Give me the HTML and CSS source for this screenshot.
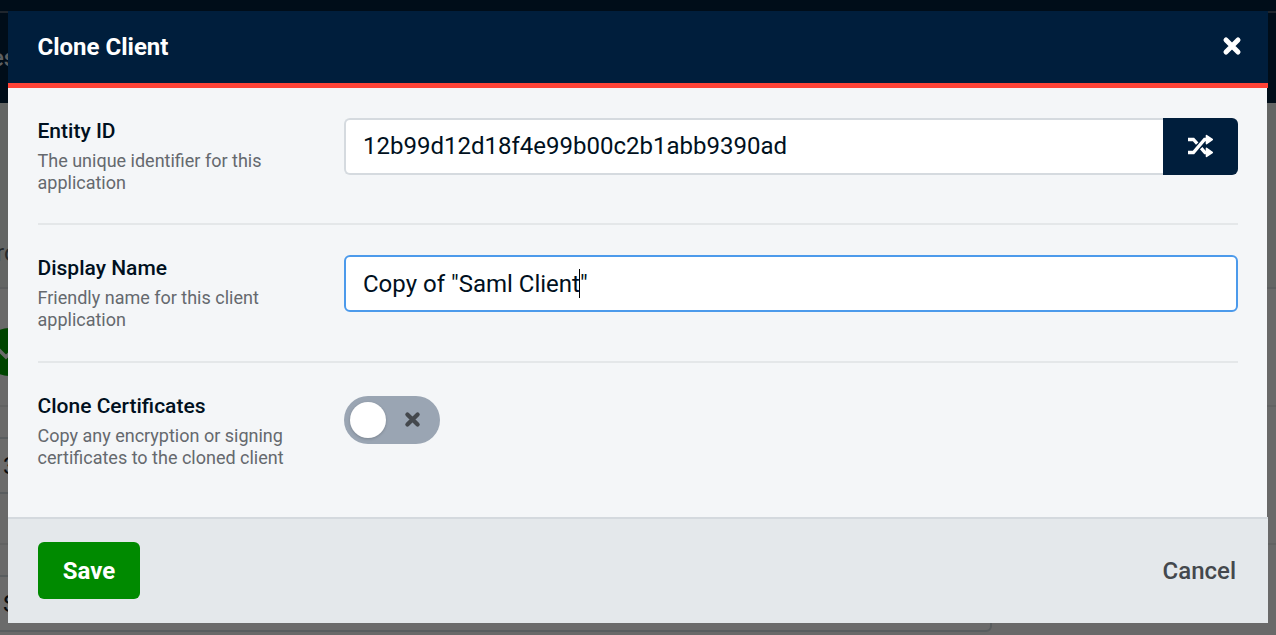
FILE: index.html
```html
<!DOCTYPE html>
<html lang="en">
<head>
<meta charset="utf-8">
<title>Clone Client</title>
<link rel="stylesheet" href="styles.css">
</head>
<body>
<div class="page" aria-hidden="true">
  <div class="page-top"></div>
  <div class="page-nav">es</div>
  <div class="page-head">ro</div>
  <div class="page-row page-status"><span class="status"><svg viewBox="0 0 24 24" width="24" height="24"><path d="M1 9l8 8L22 4"/></svg></span></div>
  <div class="page-row page-first"><div class="page-field">3</div></div>
  <div class="page-row page-second"><div class="page-field">S</div></div>
</div>
<div class="modal" role="dialog" aria-labelledby="title">
  <header class="modal-header">
    <h1 id="title">Clone Client</h1>
    <button class="close" aria-label="Close"><svg viewBox="0 0 20 20" width="20" height="20"><path d="M4 4l12 12M16 4L4 16"/></svg></button>
  </header>
  <main class="modal-body">
    <section class="row">
      <div class="label"><h2>Entity ID</h2><p>The unique identifier for this application</p></div>
      <div class="control group">
        <div class="input">12b99d12d18f4e99b00c2b1abb9390ad</div>
        <button class="shuffle" aria-label="Generate"><svg viewBox="0 0 26 26" width="26" height="26"><path class="line" d="M1 6.5h5.4l3.8 4.1M14.2 15.2l3.8 4.3h2M1 19.5h5.4L17.6 6.5H20"/><path class="head" d="M19.5 2.6l5.7 3.9-5.7 4.1zM19.5 15.4l5.7 4.1-5.7 3.9z"/></svg></button>
      </div>
    </section>
    <section class="row">
      <div class="label"><h2>Display Name</h2><p>Friendly name for this client application</p></div>
      <div class="control"><div class="input focused">Copy of "Saml Client<span class="caret"></span>"</div></div>
    </section>
    <section class="row">
      <div class="label"><h2>Clone Certificates</h2><p>Copy any encryption or signing certificates to the cloned client</p></div>
      <div class="control"><div class="toggle" role="switch" aria-checked="false"><span class="knob"></span><svg viewBox="0 0 20 20" width="17" height="17"><path d="M4 4l12 12M16 4L4 16"/></svg></div></div>
    </section>
  </main>
  <footer class="modal-footer"><button class="save">Save</button><button class="cancel">Cancel</button></footer>
</div>
</body>
</html>
```
FILE: styles.css
```css
* { box-sizing: border-box; }
body { margin: 0; height: 635px; overflow: hidden; font-family: Roboto, sans-serif; color: #001020; background: #696969; }
h1, h2, p { margin: 0; }
button { border: 0; padding: 0; font: inherit; background: none; }

.page { display: flex; flex-direction: column; height: 635px; overflow: hidden; color: #070a0d; font-size: 24px; }
.page-top { height: 13px; flex: none; background: #000d19; border-bottom: 2px solid #1f262e; }
.page-nav { height: 90px; flex: none; background: #000d19; color: #5c5f61; font-size: 24px; font-weight: 500; line-height: 91px; text-indent: -9px; }
.page-head { height: 186px; flex: none; padding-top: 132px; background: #636564; border-bottom: 2px solid #5c5e5f; color: #262a2d; line-height: 36px; text-indent: -4px; }
.page-row { flex: none; border-bottom: 2px solid #616262; }
.page-status { height: 118px; padding-top: 39px; }
.status { display: flex; align-items: center; justify-content: center; width: 48px; height: 48px; margin-left: -15px; border-radius: 50%; background: #004500; }
.status svg { fill: none; stroke: #696b69; stroke-width: 3.5; }
.page-first { height: 138px; padding-top: 30px; }
.page-second { height: 120px; padding-top: 30px; border: 0; }
.page-field { width: 1010px; height: 57px; margin-left: -18px; padding-left: 19px; border: 2px solid #595d5f; border-radius: 6px; background: #6b6b6b; line-height: 54px; }

.modal { position: absolute; top: 11px; left: 8px; width: 1260px; height: 612px; display: flex; flex-direction: column; }
.modal-header { height: 77px; flex: none; display: flex; align-items: center; justify-content: space-between; padding: 0 26.5px 0 29.5px; background: #001e3c; border-bottom: 5px solid #ff4337; color: #fff; }
.modal-header h1 { font-size: 24px; line-height: 30px; font-weight: 700; }
.close { width: 20px; height: 20px; margin-top: -2px; }
.close svg, .toggle svg { display: block; fill: none; stroke: currentColor; stroke-width: 5; stroke-linecap: round; }
.close { color: #fff; }
.modal-body { flex: 1; width: 1259px; padding: 0 29px 0 30px; background: #f4f6f8; }
.row { display: flex; gap: 36px; height: 137px; padding-top: 30px; border-bottom: 2px solid #e4e7e9; }
.row + .row { height: 138px; }
.row:last-child { height: 154px; border: 0; }
.label { width: 270px; flex: none; margin-left: -.5px; margin-right: .5px; }
.label h2 { font-size: 21px; line-height: 26px; font-weight: 500; }
.label p { margin-top: 6px; font-size: 18px; line-height: 22px; color: #65696e; }
.control { flex: 1; }
.group { display: flex; }
.input { height: 57px; flex: 1; padding-left: 17px; border: 2px solid #d5dadf; border-radius: 6px; background: #fff; font-size: 24px; line-height: 52px; white-space: pre; }
.group .input { border-right: 0; border-radius: 6px 0 0 6px; }
.input.focused { border-color: #4c9aeb; line-height: 54px; }
.caret { display: inline-block; width: 1px; height: 29px; margin: 0 0 0 -1px; background: #000; vertical-align: -6px; }
.shuffle { display: flex; align-items: center; justify-content: center; width: 75px; height: 57px; padding: 0 2px 1px 0; border-radius: 0 6px 6px 0; background: #001e3c; }
.shuffle .line { fill: none; stroke: #fff; stroke-width: 3.3; }
.shuffle .head { fill: #fff; stroke: #fff; stroke-width: 1.6; stroke-linejoin: round; }
.toggle { display: flex; align-items: center; width: 96px; height: 48px; padding-left: 6px; border-radius: 24px; background: #9aa5b3; color: #44484d; margin-top: 3px; }
.toggle svg { margin-top: -2px; }
.knob { width: 36px; height: 36px; margin-right: 18px; border-radius: 50%; background: #fff; box-shadow: 0 1px 3px rgba(0, 0, 0, .2); }
.modal-footer { height: 106px; flex: none; display: flex; align-items: center; justify-content: space-between; padding: 0 32px 0 30px; background: #e4e8eb; border-top: 2px solid #d4d9de; font-size: 24px; }
.save { width: 102px; height: 57px; margin-top: -1px; padding-top: 1px; border-radius: 6px; background: #008a00; color: #fff; font-weight: 700; }
.cancel { color: #44484d; font-weight: 500; }
```
